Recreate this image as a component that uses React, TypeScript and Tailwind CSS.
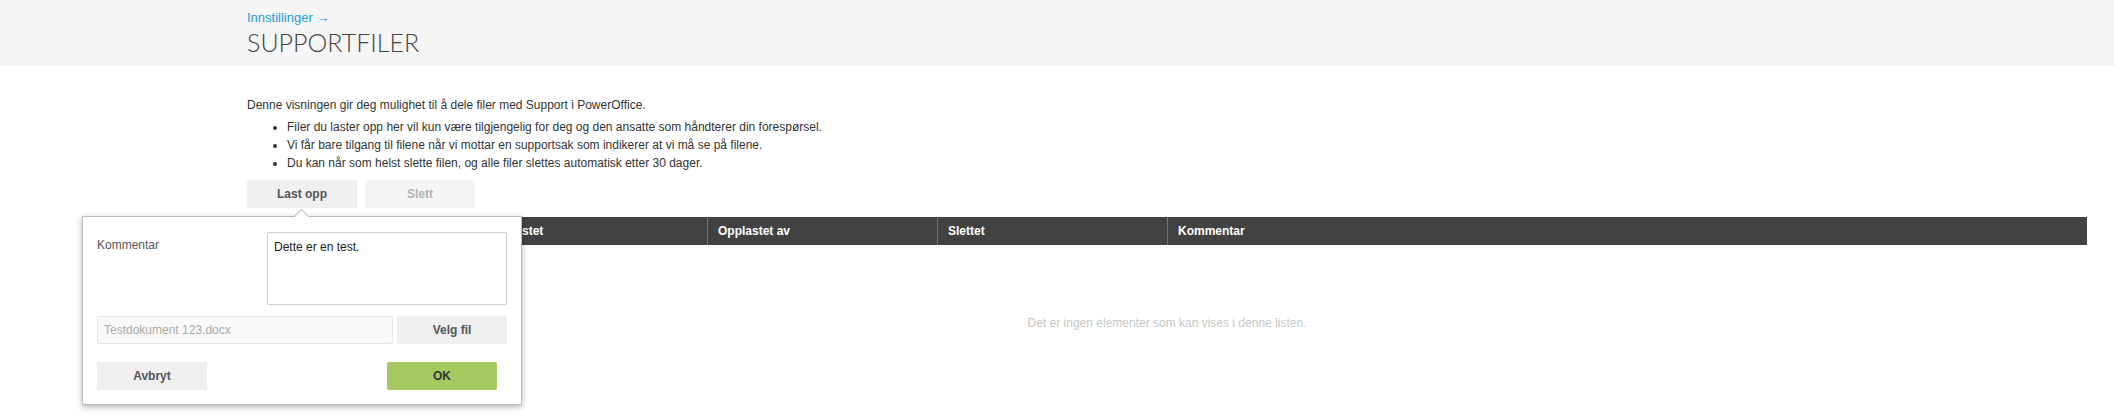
import React from "react";

const columns = ["Filnavn", "Opplastet", "Opplastet av", "Slettet", "Kommentar"];

const bullets = [
  "Filer du laster opp her vil kun være tilgjengelig for deg og den ansatte som håndterer din forespørsel.",
  "Vi får bare tilgang til filene når vi mottar en supportsak som indikerer at vi må se på filene.",
  "Du kan når som helst slette filen, og alle filer slettes automatisk etter 30 dager.",
];

function UploadPopover() {
  return (
    <div className="absolute left-[-165px] top-[36px] z-10 w-[440px] border border-[#bdbdbd] bg-white px-[14px] pb-[14px] pt-[15px] shadow-[0_2px_6px_rgba(0,0,0,0.3)]">
      <div className="absolute -top-[6px] left-[213px] h-[11px] w-[11px] rotate-45 border-l border-t border-[#bdbdbd] bg-white" />
      <div className="flex">
        <label className="w-[170px] pt-[4px] text-[12px] leading-[18px] text-[#555]">Kommentar</label>
        <textarea
          className="h-[73px] w-[240px] resize-none rounded-[2px] border border-[#cccccc] px-[6px] py-[5px] text-[12px] leading-[18px] text-[#222] outline-none"
          defaultValue="Dette er en test."
        />
      </div>
      <div className="mt-[11px] flex gap-[4px]">
        <div className="flex h-[28px] w-[296px] items-center rounded-[2px] border border-[#e6e6e6] bg-[#f9f9f9] px-[6px] text-[12px] text-[#aaaaaa]">
          Testdokument 123.docx
        </div>
        <button className="h-[28px] w-[110px] rounded-[2px] bg-[#efefef] text-[12px] font-bold text-[#555]">
          Velg fil
        </button>
      </div>
      <div className="mt-[18px] flex justify-between pr-[10px]">
        <button className="h-[28px] w-[110px] rounded-[2px] bg-[#efefef] text-[12px] font-bold text-[#555]">
          Avbryt
        </button>
        <button className="h-[28px] w-[110px] rounded-[2px] bg-[#a3c960] text-[12px] font-bold text-[#333]">
          OK
        </button>
      </div>
    </div>
  );
}

export default function App() {
  return (
    <div className="min-h-[418px] bg-white font-['Liberation_Sans',Arial,sans-serif]">
      <header className="h-[66px] bg-[#f5f5f5] pl-[247px] pt-[9px]">
        <a className="block text-[13px] leading-[18px] text-[#1a9bd7]">Innstillinger →</a>
        <h1 className="font-['Lato',sans-serif] text-[25px] font-light leading-[30px] text-[#444]">
          SUPPORTFILER
        </h1>
      </header>

      <main className="pl-[247px] pr-[27px] pt-[30px]">
        <p className="text-[12px] leading-[18px] text-[#333]">
          Denne visningen gir deg mulighet til å dele filer med Support i PowerOffice.
        </p>
        <ul className="mt-1 list-disc pl-[40px] text-[12px] leading-[18px] text-[#333]">
          {bullets.map((b) => (
            <li key={b}>{b}</li>
          ))}
        </ul>

        <div className="relative mt-[8px] flex gap-2">
          <button className="h-[28px] w-[110px] rounded-[2px] bg-[#efefef] text-[12px] font-bold text-[#555]">
            Last opp
          </button>
          <button className="h-[28px] w-[110px] rounded-[2px] bg-[#f5f5f5] text-[12px] font-bold text-[#b3b3b3]">
            Slett
          </button>
          <UploadPopover />
        </div>

        <div className="mt-[9px]">
          <div className="grid h-[28px] grid-cols-[230px_230px_230px_230px_1fr] bg-[#424242]">
            {columns.map((c, i) => (
              <div
                key={c}
                className={
                  i === 0
                    ? "px-[10px] text-[12px] font-bold leading-[28px] text-white"
                    : "border-l border-[#737373] px-[10px] text-[12px] font-bold leading-[28px] text-white"
                }
              >
                {c}
              </div>
            ))}
          </div>
          <p className="pt-[69px] text-center text-[12px] leading-[18px] text-[#c6c6c6]">
            Det er ingen elementer som kan vises i denne listen.
          </p>
        </div>
      </main>
    </div>
  );
}
